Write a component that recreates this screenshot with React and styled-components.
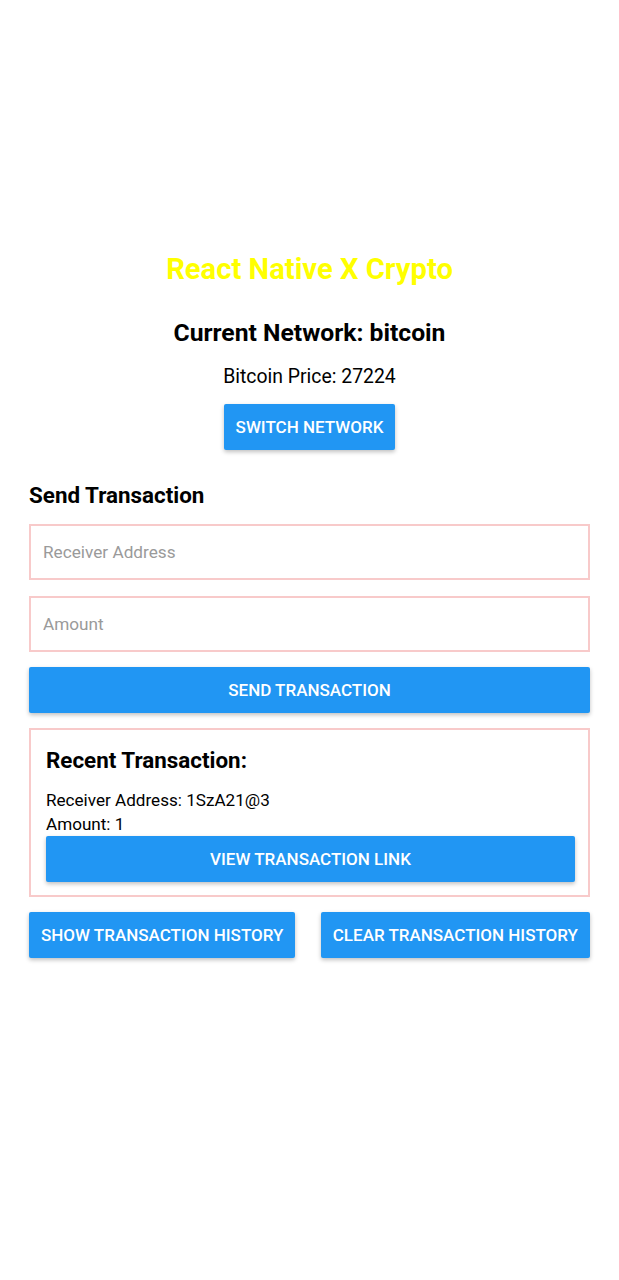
import React from "react";
import styled, { createGlobalStyle } from "styled-components";

const Global = createGlobalStyle`
  html, body { margin: 0; padding: 0; background: #fff; }
  body { font-family: Roboto, "Noto Sans", sans-serif; color: #000; }
  * { box-sizing: border-box; }
`;

const Page = styled.div`
  width: 619px;
  min-height: 1280px;
  padding: 250px 29px 0 29px;
  display: flex;
  flex-direction: column;
`;

const Title = styled.h1`
  margin: 0;
  text-align: center;
  color: #ffff00;
  font-size: 29.2px;
  font-weight: 700;
  line-height: 38px;
`;

const Network = styled.h2`
  margin: 30px 0 0;
  text-align: center;
  font-size: 24.7px;
  font-weight: 700;
  line-height: 30px;
`;

const Price = styled.div`
  margin-top: 17px;
  text-align: center;
  font-size: 19.4px;
  line-height: 24px;
`;

const Button = styled.button`
  border: none;
  background: #2196f3;
  color: #fff;
  font-family: Roboto, sans-serif;
  font-weight: 500;
  font-size: 17px;
  text-transform: uppercase;
  height: 46px;
  padding: 0 12px;
  border-radius: 2px;
  box-shadow: 0 2px 4px rgba(0, 0, 0, 0.25);
  display: flex;
  align-items: center;
  justify-content: center;
  white-space: nowrap;
  width: ${(p) => (p.$full ? "100%" : "auto")};
`;

const CenterRow = styled.div`
  display: flex;
  justify-content: center;
  margin-top: 15px;
`;

const SectionTitle = styled.h3`
  margin: 31px 0 0;
  font-size: 22.4px;
  font-weight: 700;
  line-height: 28px;
`;

const Form = styled.div`
  display: flex;
  flex-direction: column;
  gap: 16px;
  margin-top: 15px;
`;

const Input = styled.input`
  height: 56px;
  width: 100%;
  border: 2px solid #f8caca;
  border-radius: 0;
  padding: 0 12px;
  font-family: Roboto, sans-serif;
  font-size: 17.2px;
  outline: none;
  &::placeholder { color: #9a9a9a; }
`;

const FormButton = styled(Button)`
  margin-top: -1px;
`;

const RecentBox = styled.div`
  margin-top: 15px;
  border: 2px solid #f8caca;
  padding: 15px 13px 13px 15px;
  display: flex;
  flex-direction: column;
`;

const RecentTitle = styled.div`
  font-size: 22.4px;
  font-weight: 700;
  line-height: 30px;
`;

const InfoLine = styled.div`
  font-size: 17.1px;
  line-height: 24px;
  margin-top: ${(p) => (p.$first ? "13px" : "0")};
`;

const BottomRow = styled.div`
  display: flex;
  justify-content: space-between;
  margin-top: 15px;
`;

export default function App() {
  return (
    <>
      <Global />
      <Page>
        <Title>React Native X Crypto</Title>
        <Network>Current Network: bitcoin</Network>
        <Price>Bitcoin Price: 27224</Price>
        <CenterRow>
          <Button>Switch Network</Button>
        </CenterRow>
        <SectionTitle>Send Transaction</SectionTitle>
        <Form>
          <Input placeholder="Receiver Address" />
          <Input placeholder="Amount" />
          <FormButton $full>Send Transaction</FormButton>
        </Form>
        <RecentBox>
          <RecentTitle>Recent Transaction:</RecentTitle>
          <InfoLine $first>Receiver Address: 1SzA21@3</InfoLine>
          <InfoLine>Amount: 1</InfoLine>
          <Button $full>View Transaction Link</Button>
        </RecentBox>
        <BottomRow>
          <Button>Show Transaction History</Button>
          <Button>Clear Transaction History</Button>
        </BottomRow>
      </Page>
    </>
  );
}
